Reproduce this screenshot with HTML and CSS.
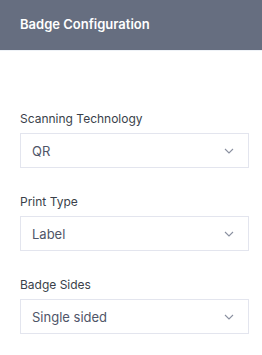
FILE: index.html
```html
<!DOCTYPE html>
<html lang="en">
<head>
    <meta charset="UTF-8">
    <meta name="viewport" content="width=device-width, initial-scale=1.0">
    <title>Badge Configuration</title>
    <link rel="stylesheet" href="styles.css">
</head>
<body>
    <div class="panel">
        <div class="panel-header">Badge Configuration</div>
        <div class="panel-body">
            <div class="field">
                <label class="field-label">Scanning Technology</label>
                <div class="select">
                    <span>QR</span>
                    <svg class="chevron" width="10" height="6" viewBox="0 0 10 6"><path d="M1 1l4 4 4-4" fill="none" stroke="#8a90a0" stroke-width="1.1"/></svg>
                </div>
            </div>
            <div class="field">
                <label class="field-label">Print Type</label>
                <div class="select">
                    <span>Label</span>
                    <svg class="chevron" width="10" height="6" viewBox="0 0 10 6"><path d="M1 1l4 4 4-4" fill="none" stroke="#8a90a0" stroke-width="1.1"/></svg>
                </div>
            </div>
            <div class="field">
                <label class="field-label">Badge Sides</label>
                <div class="select">
                    <span>Single sided</span>
                    <svg class="chevron" width="10" height="6" viewBox="0 0 10 6"><path d="M1 1l4 4 4-4" fill="none" stroke="#8a90a0" stroke-width="1.1"/></svg>
                </div>
            </div>
        </div>
    </div>
</body>
</html>
```

FILE: styles.css
```css
body {
    margin: 0;
    font-family: Inter, "Noto Sans", sans-serif;
    background: #fff;
}
.panel-header {
    height: 51px;
    box-sizing: border-box;
    padding: 0 20px 2px;
    display: flex;
    align-items: center;
    background: #666e80;
    color: #fff;
    font-size: 13px;
    font-weight: 600;
    border-bottom: 1px solid #eef2f7;
}
.panel-body {
    padding: 60px 13px 0 20px;
}
.field {
    margin-bottom: 26px;
}
.field-label {
    display: block;
    font-size: 12px;
    color: #3a3f4a;
    line-height: 16px;
    margin-bottom: 6px;
}
.select {
    height: 35px;
    box-sizing: border-box;
    border: 1px solid #e3e5ee;
    display: flex;
    align-items: center;
    justify-content: space-between;
    padding: 0 14px 0 11px;
    font-size: 13px;
    color: #4f5568;
}
```
